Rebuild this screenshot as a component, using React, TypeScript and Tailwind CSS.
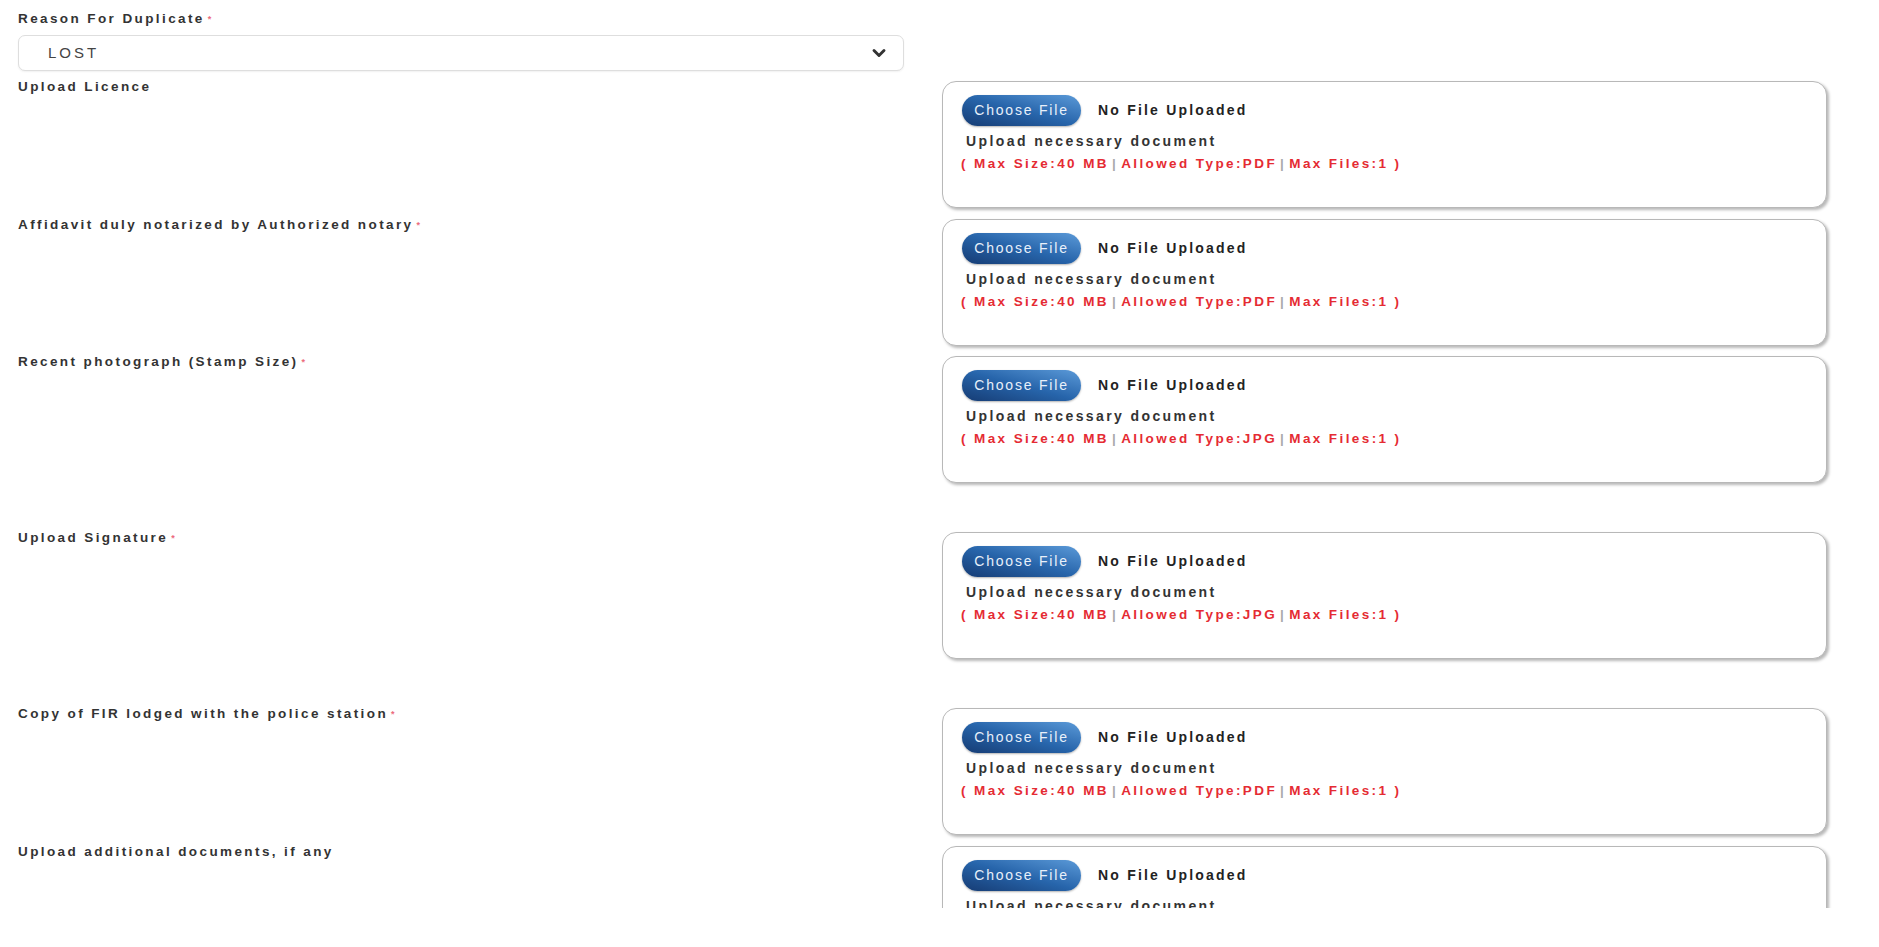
import { ChevronDown } from "lucide-react";

type Doc = {
  label: string;
  required: boolean;
  type: string;
  gap: string;
};

const docs: Doc[] = [
  { label: "Upload Licence", required: false, type: "PDF", gap: "mb-[11px]" },
  { label: "Affidavit duly notarized by Authorized notary", required: true, type: "PDF", gap: "mb-[10px]" },
  { label: "Recent photograph (Stamp Size)", required: true, type: "JPG", gap: "mb-[49px]" },
  { label: "Upload Signature", required: true, type: "JPG", gap: "mb-[49px]" },
  { label: "Copy of FIR lodged with the police station", required: true, type: "PDF", gap: "mb-[11px]" },
  { label: "Upload additional documents, if any", required: false, type: "PDF", gap: "mb-[11px]" },
];

function Label({ text, required }: { text: string; required: boolean }) {
  return (
    <div className="text-[13.5px] leading-4 font-bold tracking-[2.4px] text-[#333]">
      {text}
      {required && <span className="ml-[3px] text-[9px] align-top text-[#ec6b7c]">*</span>}
    </div>
  );
}

function UploadCard({ type }: { type: string }) {
  return (
    <div className="h-[127px] rounded-[14px] border-[1.5px] border-[#b8b8b8] bg-white pl-[18px] pt-[13px] shadow-[2px_2px_3px_rgba(0,0,0,0.28)]">
      <div className="flex items-center">
        <button className="ml-[1px] flex h-[31px] w-[119px] items-center justify-center rounded-full bg-gradient-to-tr from-[#163c74] via-[#2765ab] to-[#5b9ad8] text-[14px] tracking-[1.8px] text-[#e8f0fa] shadow-[0_1px_2px_rgba(0,0,0,0.3)]">
          Choose File
        </button>
        <span className="ml-[17px] text-[14px] font-bold tracking-[2.2px] text-[#222]">No File Uploaded</span>
      </div>
      <div className="ml-[5px] mt-[6px] text-[14px] leading-[18px] font-bold tracking-[2.4px] text-[#333]">
        Upload necessary document
      </div>
      <div className="mt-[5px] text-[13.5px] leading-[18px] font-bold tracking-[2.4px] text-[#e52b33]">
        ( Max Size:40 MB<span className="mx-[3px] text-[#aaa]">|</span>Allowed Type:{type}<span className="mx-[3px] text-[#aaa]">|</span>Max Files:1 )
      </div>
    </div>
  );
}

export default function App() {
  return (
    <div className="h-[947px] bg-white" style={{ fontFamily: '"Liberation Sans", Arial, sans-serif' }}>
      <div className="h-[908px] overflow-hidden pl-[18px] pt-[11px]">
        <div className="w-[886px]">
          <Label text="Reason For Duplicate" required={true} />
          <div className="mt-[8px] flex h-[36px] items-center justify-between rounded-[7px] border border-[#dedede] bg-white pl-[29px] pr-[14px] shadow-[0_1px_2px_rgba(0,0,0,0.06)]">
            <span className="text-[15px] tracking-[3px] text-[#444]">LOST</span>
            <ChevronDown size={20} strokeWidth={3.5} className="text-[#333]" />
          </div>
        </div>

        <div className="mt-[10px]">
          {docs.map((d) => (
            <div key={d.label} className={`grid grid-cols-[886px_885px] gap-x-[38px] ${d.gap}`}>
              <div className="-mt-[2px]">
                <Label text={d.label} required={d.required} />
              </div>
              <UploadCard type={d.type} />
            </div>
          ))}
        </div>
      </div>
    </div>
  );
}
